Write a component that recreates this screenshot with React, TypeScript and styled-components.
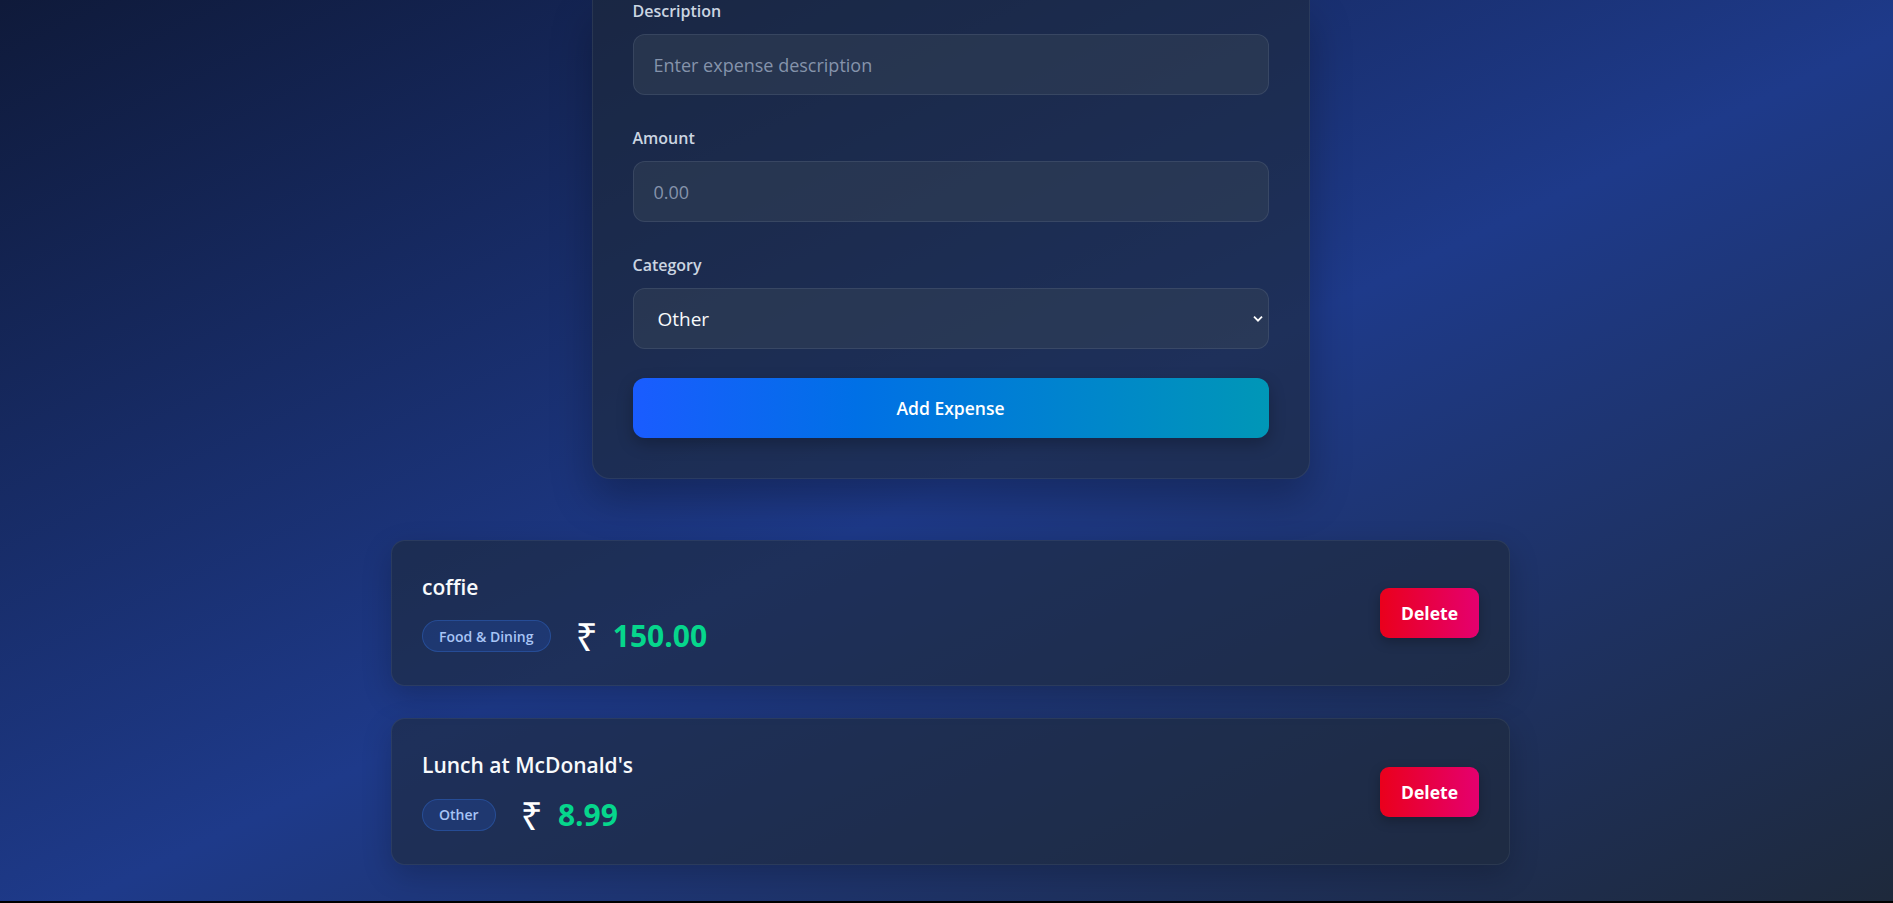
import React, { useState } from 'react';
import styled, { createGlobalStyle } from 'styled-components';

interface Expense {
  id: number;
  description: string;
  amount: number;
  category: string;
}

const GlobalStyle = createGlobalStyle`
  html, body {
    margin: 0;
    padding: 0;
    background: #000;
  }
  * {
    box-sizing: border-box;
  }
`;

const Page = styled.div`
  min-height: calc(100vh - 2px);
  padding: 0 0 35px 8px;
  background: linear-gradient(to bottom right, #0f1a3a 0%, #1e3a8a 52%, #1e293b 100%);
  background-attachment: fixed;
  font-family: 'Open Sans', 'Noto Sans', sans-serif;
  color: #f8fafc;
  display: flex;
  flex-direction: column;
  align-items: center;
`;

const FormCard = styled.div`
  width: 718px;
  padding: 0 40px 40px;
  background: rgba(30, 41, 59, 0.6);
  border: 1px solid rgba(148, 163, 184, 0.12);
  border-top: none;
  border-radius: 0 0 18px 18px;
  box-shadow: 0 20px 40px rgba(0, 0, 0, 0.25);
  display: flex;
  flex-direction: column;
`;

const Field = styled.div<{ $gap: number }>`
  display: flex;
  flex-direction: column;
  margin-bottom: ${(p) => p.$gap}px;
`;

const Label = styled.label`
  font-size: 16px;
  font-weight: 600;
  line-height: 22px;
  color: #cbd5e1;
  margin-bottom: 12px;
`;

const TextInput = styled.input`
  height: 61px;
  width: 100%;
  padding: 0 20px;
  font-family: inherit;
  font-size: 18px;
  color: #f8fafc;
  background: rgba(51, 65, 85, 0.5);
  border: 1px solid rgba(148, 163, 184, 0.16);
  border-radius: 12px;
  outline: none;

  &::placeholder {
    color: #8593ab;
  }
`;

const SelectWrap = styled.div`
  position: relative;
`;

const Select = styled.select`
  appearance: none;
  height: 61px;
  width: 100%;
  padding: 0 24px;
  font-family: inherit;
  font-size: 19px;
  color: #f8fafc;
  background: rgba(51, 65, 85, 0.5);
  border: 1px solid rgba(148, 163, 184, 0.16);
  border-radius: 12px;
  outline: none;
`;

const Chevron = styled.svg`
  position: absolute;
  right: 6px;
  top: 50%;
  transform: translateY(-50%);
  pointer-events: none;
`;

const AddButton = styled.button`
  height: 60px;
  width: 100%;
  border: none;
  border-radius: 12px;
  background: linear-gradient(90deg, #1a5cff 0%, #0070e6 35%, #0097b7 100%);
  color: #fff;
  font-family: inherit;
  font-size: 17.5px;
  font-weight: 600;
  box-shadow: 0 6px 16px rgba(0, 0, 0, 0.25);
  cursor: pointer;
`;

const List = styled.div`
  width: 1119px;
  margin-top: 61px;
  display: flex;
  flex-direction: column;
  gap: 32px;
`;

const ItemCard = styled.div`
  padding: 31px 30px 31px;
  background: rgba(30, 41, 59, 0.6);
  border: 1px solid rgba(148, 163, 184, 0.12);
  border-radius: 14px;
  box-shadow: 0 10px 30px rgba(0, 0, 0, 0.2);
  display: flex;
  align-items: center;
  justify-content: space-between;
`;

const Info = styled.div`
  display: flex;
  flex-direction: column;
  gap: 16px;
`;

const Title = styled.div`
  font-size: 21px;
  font-weight: 600;
  line-height: 1.45;
  color: #f8fafc;
`;

const Meta = styled.div`
  display: flex;
  align-items: center;
  gap: 25px;
  height: 36px;
`;

const Badge = styled.span`
  height: 32px;
  padding: 0 16px;
  display: inline-flex;
  align-items: center;
  font-size: 14px;
  font-weight: 600;
  color: #a8c4f5;
  background: rgba(37, 99, 235, 0.18);
  border: 1px solid rgba(59, 130, 246, 0.28);
  border-radius: 16px;
`;

const Amount = styled.span`
  display: inline-flex;
  align-items: center;
  font-size: 30px;
  font-weight: 700;
  line-height: 36px;
  color: #06d68c;
`;

const Rupee = styled.span`
  font-family: 'Noto Sans', 'DejaVu Sans', sans-serif;
  font-weight: 400;
  font-size: 39px;
  line-height: 36px;
  color: #fff;
  margin-right: 15px;
`;

const DeleteButton = styled.button`
  height: 50px;
  padding: 0 21px;
  border: none;
  border-radius: 9px;
  background: linear-gradient(90deg, #ea001c 0%, #e5006f 100%);
  color: #fff;
  font-family: inherit;
  font-size: 17.5px;
  font-weight: 700;
  box-shadow: 0 4px 12px rgba(0, 0, 0, 0.25);
  cursor: pointer;
`;

const initialExpenses: Expense[] = [
  { id: 1, description: 'coffie', amount: 150, category: 'Food & Dining' },
  { id: 2, description: "Lunch at McDonald's", amount: 8.99, category: 'Other' },
];

const categories = ['Food & Dining', 'Transportation', 'Shopping', 'Entertainment', 'Bills & Utilities', 'Other'];

export default function App() {
  const [expenses, setExpenses] = useState<Expense[]>(initialExpenses);
  const [description, setDescription] = useState('');
  const [amount, setAmount] = useState('');
  const [category, setCategory] = useState('Other');

  const handleAdd = () => {
    const value = parseFloat(amount);
    if (!description || isNaN(value)) return;
    setExpenses((prev) => [...prev, { id: Date.now(), description, amount: value, category }]);
    setDescription('');
    setAmount('');
  };

  const handleDelete = (id: number) => {
    setExpenses((prev) => prev.filter((e) => e.id !== id));
  };

  return (
    <>
      <GlobalStyle />
      <Page>
        <FormCard>
          <Field $gap={32}>
            <Label>Description</Label>
            <TextInput
              type="text"
              placeholder="Enter expense description"
              value={description}
              onChange={(e) => setDescription(e.target.value)}
            />
          </Field>
          <Field $gap={32}>
            <Label>Amount</Label>
            <TextInput
              type="text"
              placeholder="0.00"
              value={amount}
              onChange={(e) => setAmount(e.target.value)}
            />
          </Field>
          <Field $gap={29}>
            <Label>Category</Label>
            <SelectWrap>
              <Select value={category} onChange={(e) => setCategory(e.target.value)}>
                {categories.map((c) => (
                  <option key={c} value={c}>{c}</option>
                ))}
              </Select>
              <Chevron width="10" height="7" viewBox="0 0 10 7">
                <path d="M1 1.2 L5 5.2 L9 1.2" fill="none" stroke="#fff" strokeWidth="1.8" />
              </Chevron>
            </SelectWrap>
          </Field>
          <AddButton onClick={handleAdd}>Add Expense</AddButton>
        </FormCard>

        <List>
          {expenses.map((exp) => (
            <ItemCard key={exp.id}>
              <Info>
                <Title>{exp.description}</Title>
                <Meta>
                  <Badge>{exp.category}</Badge>
                  <Amount>
                    <Rupee>₹</Rupee>
                    {exp.amount.toFixed(2)}
                  </Amount>
                </Meta>
              </Info>
              <DeleteButton onClick={() => handleDelete(exp.id)}>Delete</DeleteButton>
            </ItemCard>
          ))}
        </List>
      </Page>
    </>
  );
}
